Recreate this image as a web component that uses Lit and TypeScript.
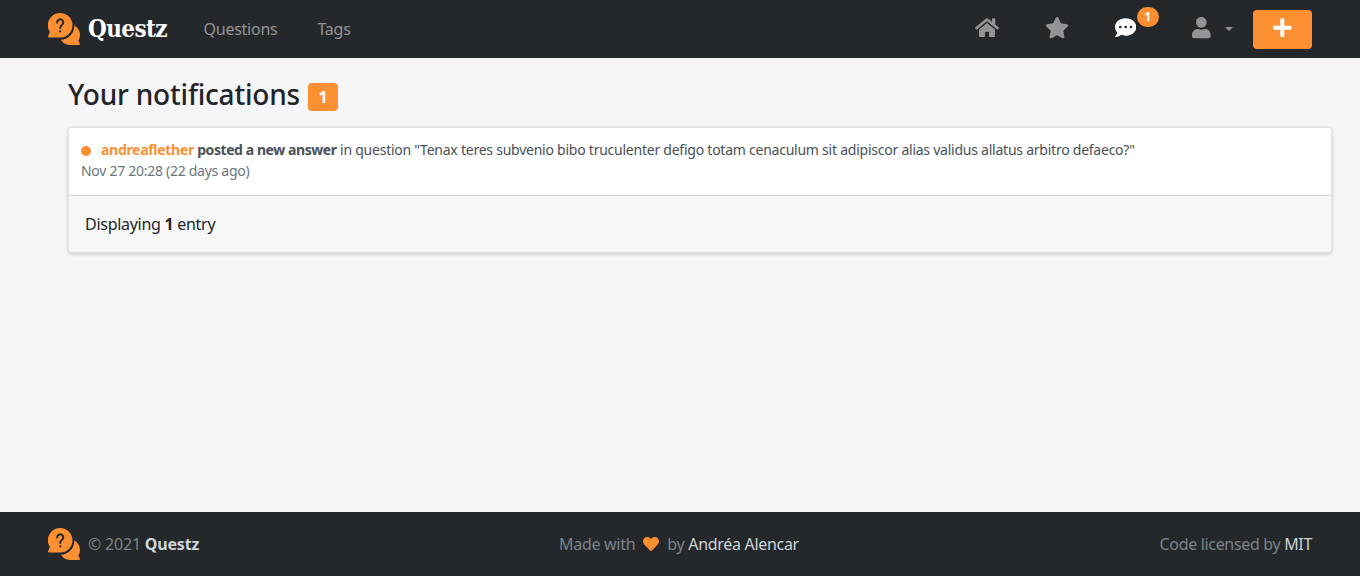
import { LitElement, html, css } from "lit";
import { customElement } from "lit/decorators.js";

const icon = (cls: string, w: number, d: string) => html`
  <svg class="icon ${cls}" viewBox="0 0 ${w} 512" aria-hidden="true"><path d=${d} /></svg>
`;

const HOME =
  "M280.37 148.26L96 300.11V464a16 16 0 0 0 16 16l112.06-.29a16 16 0 0 0 15.92-16V368a16 16 0 0 1 16-16h64a16 16 0 0 1 16 16v95.64a16 16 0 0 0 16 16.05L464 480a16 16 0 0 0 16-16V300L295.67 148.26a12.19 12.19 0 0 0-15.3 0zM571.6 251.47L488 182.56V44.05a12 12 0 0 0-12-12h-56a12 12 0 0 0-12 12v72.61L318.47 43a48 48 0 0 0-61 0L4.34 251.47a12 12 0 0 0-1.6 16.9l25.5 31A12 12 0 0 0 45.15 301l235.22-193.74a12.19 12.19 0 0 1 15.3 0L530.9 301a12 12 0 0 0 16.9-1.6l25.5-31a12 12 0 0 0-1.7-16.93z";
const STAR =
  "M259.3 17.8L194 150.2 47.9 171.5c-26.2 3.8-36.7 36.1-17.7 54.6l105.7 103-25 145.5c-4.5 26.3 23.2 46 46.4 33.7L288 439.6l130.7 68.7c23.2 12.2 50.9-7.4 46.4-33.7l-25-145.5 105.7-103c19-18.5 8.5-50.8-17.7-54.6L382 150.2 316.7 17.8c-11.7-23.6-45.6-23.9-57.4 0z";
const COMMENT =
  "M256 32C114.6 32 0 125.1 0 240c0 49.6 21.4 95 57 130.7C44.5 421.1 2.7 466 2.2 466.5c-2.2 2.3-2.8 5.7-1.5 8.7S4.8 480 8 480c66.3 0 116-31.8 140.6-51.4 32.7 12.3 69 19.4 107.4 19.4 141.4 0 256-93.1 256-208S397.4 32 256 32zM128 272c-17.7 0-32-14.3-32-32s14.3-32 32-32 32 14.3 32 32-14.3 32-32 32zm128 0c-17.7 0-32-14.3-32-32s14.3-32 32-32 32 14.3 32 32-14.3 32-32 32zm128 0c-17.7 0-32-14.3-32-32s14.3-32 32-32 32 14.3 32 32-14.3 32-32 32z";
const USER =
  "M224 256c70.7 0 128-57.3 128-128S294.7 0 224 0 96 57.3 96 128s57.3 128 128 128zm89.6 32h-16.7c-22.2 10.2-46.9 16-72.9 16s-50.6-5.8-72.9-16h-16.7C60.2 288 0 348.2 0 422.4V464c0 26.5 21.5 48 48 48h352c26.5 0 48-21.5 48-48v-41.6c0-74.2-60.2-134.4-134.4-134.4z";
const PLUS =
  "M416 208H272V64c0-17.67-14.33-32-32-32h-32c-17.67 0-32 14.33-32 32v144H32c-17.67 0-32 14.33-32 32v32c0 17.67 14.33 32 32 32h144v144c0 17.67 14.33 32 32 32h32c17.67 0 32-14.33 32-32V304h144c17.67 0 32-14.33 32-32v-32c0-17.67-14.33-32-32-32z";
const HEART =
  "M462.3 62.6C407.5 15.9 326 24.3 275.7 76.2L256 96.5l-19.7-20.3C186.1 24.3 104.5 15.9 49.7 62.6c-62.8 53.6-66.1 149.8-9.9 207.9l193.5 199.8c12.5 12.9 32.8 12.9 45.3 0l193.5-199.8c56.3-58.1 53-154.3-9.8-207.9z";

const logo = html`
  <svg class="logo" viewBox="0 0 32 32" aria-hidden="true">
    <path class="fill" d="M12.2 0A12.2 12.2 0 0 1 12.2 24.5H.9Q0 24.5 0 23.5L1.9 19A12.2 12.2 0 0 1 12.2 0z" />
    <path class="fill" d="M26.4 12.2C30 14.5 32 18 32 22q0 3-1.600 5.800L32 31q.1 1-.9 1H21.800C18 32 14.800 30 13 26.800C20.300 26.400 26.500 20.400 26.400 12.200z" />
    <path class="mark" d="M9.1 9.500a3.100 3.100 0 1 1 4.800 2.500c-1.100.8-1.700 1.500-1.700 3" />
    <circle class="dot" cx="12.200" cy="18.300" r="1.150" />
  </svg>
`;

@customElement("app-root")
export class AppRoot extends LitElement {
  static styles = css`
    :host {
      display: flex;
      flex-direction: column;
      height: 100vh;
      box-sizing: border-box;
      background: #f6f6f9;
      color: #212529;
      font: 16px/24px "Noto Sans", "Open Sans", sans-serif;
      letter-spacing: -0.25px;
      --accent: #fd8f33;
    }
    .icon { display: block; height: 21.33px; fill: currentColor; }
    .home, .star { width: 24px; }
    .comment { width: 21.33px; }
    .user, .plus { width: 18.67px; }
    .logo { display: block; width: 32px; height: 32px; }
    .fill { fill: var(--accent); }
    .mark { fill: none; stroke: #24282b; stroke-width: 2; stroke-linecap: round; }
    .dot { fill: #24282b; }
    header {
      display: flex;
      align-items: center;
      box-sizing: border-box;
      height: 58px;
      padding: 0 48px;
      background: #24282b;
      color: #939495;
    }
    .brand { display: flex; align-items: center; gap: 8px; width: 155.5px; color: #fff; }
    .name { font: bold 24px/32px "DejaVu Serif Condensed", "DejaVu Serif", serif; letter-spacing: -0.6px; }
    .links { display: flex; gap: 40px; flex: 1; }
    .tools { display: flex; align-items: center; }
    .tools .home { margin-right: 46.5px; }
    .tools .star { margin-right: 46px; }
    .messages { position: relative; margin-right: 55.5px; color: #fff; }
    .count {
      position: absolute;
      left: 21.5px;
      top: -10px;
      width: 22px;
      height: 20px;
      border-radius: 10px;
      background: var(--accent);
      font: bold 12px/20px "Noto Sans", sans-serif;
      text-align: center;
    }
    .caret {
      margin: -1px 20px 0 14.5px;
      border: 4.8px solid transparent;
      border-top-color: currentColor;
      border-bottom: 0;
    }
    .glyph { padding-bottom: 2px; }
    .add {
      display: flex;
      align-items: center;
      justify-content: center;
      box-sizing: border-box;
      width: 59px;
      height: 39px;
      margin-top: 1px;
      padding-bottom: 3px;
      border-radius: 4px;
      background: var(--accent);
      color: #fff;
    }
    main { flex: 1; padding: 19px 28px 0 68px; }
    h1 {
      display: flex;
      gap: 8px;
      margin: 0 0 16px;
      font-size: 28px;
      line-height: 34px;
      font-weight: 500;
      letter-spacing: -0.2px;
    }
    .total {
      width: 30px;
      height: 28px;
      margin-top: 6px;
      border-radius: 4px;
      background: var(--accent);
      color: #fff;
      font-size: 16px;
      line-height: 28px;
      font-weight: 700;
      text-align: center;
    }
    .card {
      border: 1px solid #dfdfdf;
      border-radius: 4px;
      background: #f7f7f7;
      box-shadow: 0 1px 4px rgba(0, 0, 0, 0.18);
      overflow: hidden;
    }
    .entry {
      padding: 11px 12px 14px;
      border-bottom: 1px solid #d5d5d5;
      background: #fff;
      color: #495057;
      font-size: 14px;
      line-height: 21px;
    }
    .event { display: flex; align-items: center; white-space: pre; letter-spacing: -0.24px; }
    .unread { width: 10px; height: 10px; margin: 2px 10px 0 0; border-radius: 50%; background: var(--accent); }
    .who { color: var(--accent); font-weight: 700; letter-spacing: -0.3px; }
    .what { font-weight: 700; letter-spacing: -0.42px; }
    .when { color: #6c757d; letter-spacing: -0.28px; }
    .summary { padding: 16px; letter-spacing: -0.28px; }
    footer {
      display: grid;
      grid-template-columns: 1fr auto 1fr;
      align-items: center;
      height: 64px;
      padding: 0 48px;
      background: #24282b;
      color: #7b838a;
      letter-spacing: -0.3px;
    }
    .copy { display: flex; align-items: center; gap: 8px; letter-spacing: -0.2px; }
    .author { display: flex; align-items: center; white-space: pre; margin-right: 2px; }
    .heart { width: 16px; height: 16px; margin: 0 8px; color: var(--accent); }
    .license { text-align: right; letter-spacing: -0.33px; }
    .light { color: #ced4da; }
  `;

  render() {
    return html`
      <header>
        <div class="brand">${logo}<span class="name">Questz</span></div>
        <nav class="links"><span>Questions</span><span>Tags</span></nav>
        <div class="tools">
          <span class="glyph">${icon("home", 576, HOME)}</span>
          <span class="glyph">${icon("star", 576, STAR)}</span>
          <span class="glyph messages">${icon("comment", 512, COMMENT)}<span class="count">1</span></span>
          <span class="glyph">${icon("user", 448, USER)}</span>
          <span class="caret"></span>
          <span class="add">${icon("plus", 448, PLUS)}</span>
        </div>
      </header>
      <main>
        <h1>Your notifications<span class="total">1</span></h1>
        <section class="card">
          <div class="entry">
            <div class="event"><span class="unread"></span><span class="who">andreaflether</span><span class="what"> posted a new answer</span><span> in question "Tenax teres subvenio bibo truculenter defigo totam cenaculum sit adipiscor alias validus allatus arbitro defaeco?"</span></div>
            <div class="when">Nov 27 20:28 (22 days ago)</div>
          </div>
          <div class="summary">Displaying <b>1</b> entry</div>
        </section>
      </main>
      <footer>
        <div class="copy">${logo}<span>© 2021 <b class="light">Questz</b></span></div>
        <div class="author"><span>Made with</span>${icon("heart", 512, HEART)}<span>by <span class="light">Andréa Alencar</span></span></div>
        <div class="license">Code licensed by <span class="light">MIT</span></div>
      </footer>
    `;
  }
}
